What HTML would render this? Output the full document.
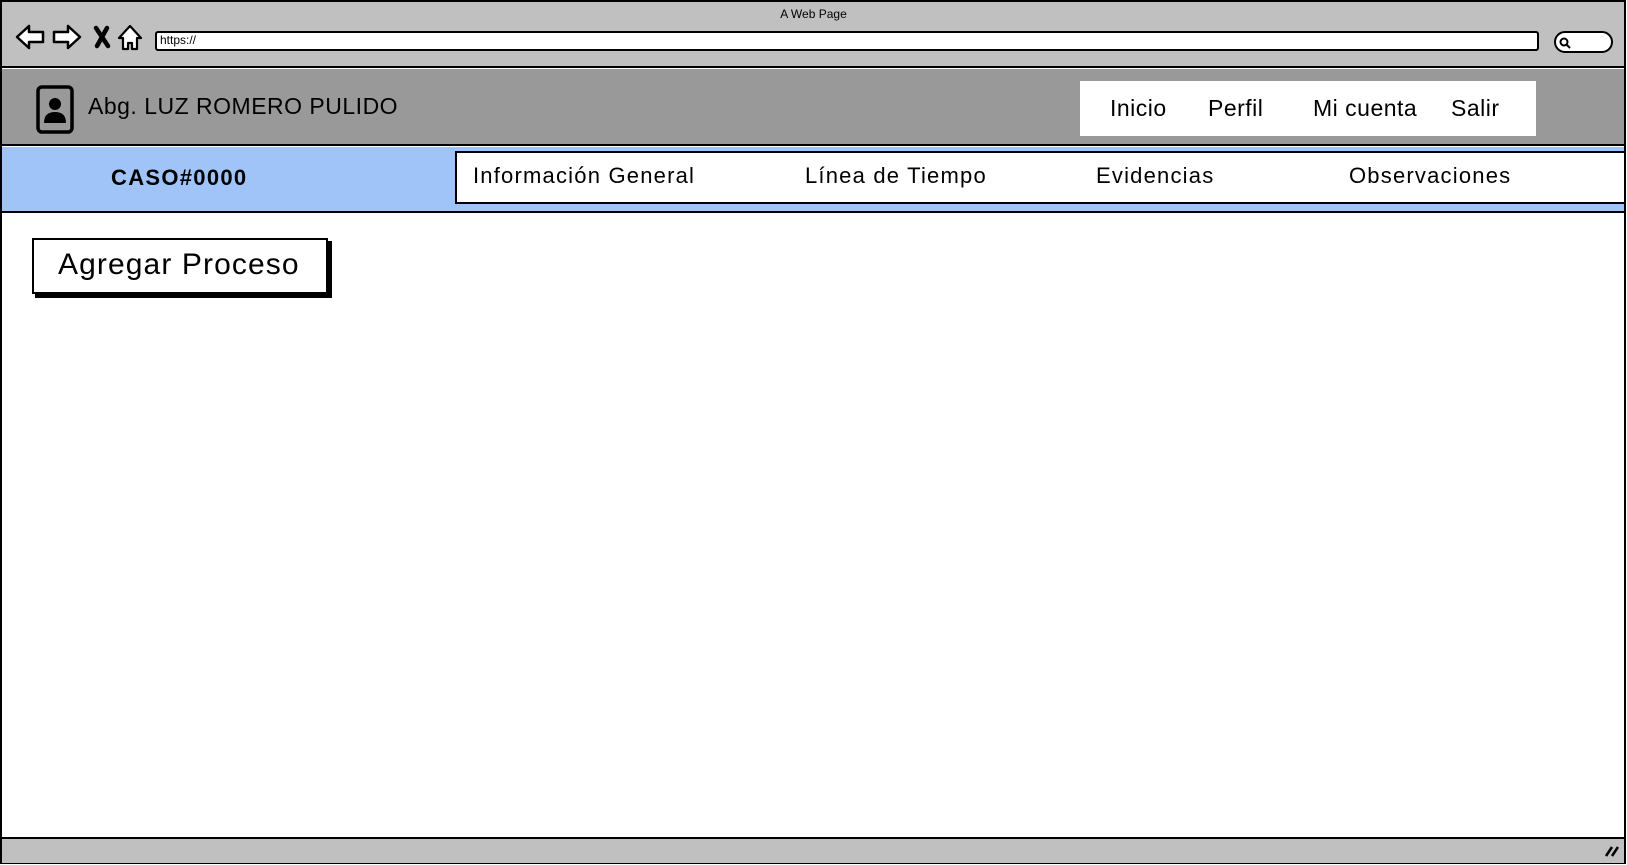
<!DOCTYPE html>
<html><head><meta charset="utf-8"><style>
*{margin:0;padding:0;box-sizing:border-box}
body{width:1627px;height:865px;overflow:hidden;background:#fff;font-family:"Liberation Sans",sans-serif;color:#000;position:relative}
.a{position:absolute}
.t{position:absolute;white-space:nowrap}
</style></head><body>
<div class="a" style="left:0;top:0;width:1626px;height:864px;border:2px solid #000;background:#fff"></div>
<div class="a" style="left:2px;top:2px;width:1622px;height:66px;background:#c0c0c0;border-bottom:2px solid #000"></div>
<div class="t" style="left:0;width:1627px;text-align:center;top:7px;font-size:12px">A Web Page</div>
<svg class="a" style="left:12px;top:20px" width="140" height="34" viewBox="0 0 140 34">
<path d="M5 17 L17 6 L17 12 L31 12 L31 22 L17 22 L17 28 Z" fill="#fff" stroke="#000" stroke-width="2.5" stroke-linejoin="round"/>
<path d="M68 17 L56 6 L56 12 L42 12 L42 22 L56 22 L56 28 Z" fill="#fff" stroke="#000" stroke-width="2.5" stroke-linejoin="round"/>
<path d="M84 8 L96 26 M95 8 L85 26" stroke="#000" stroke-width="4.5" stroke-linecap="round"/>
<path d="M118 6 L107 18 L111 18 L111 29 L116 29 L116 23 L120 23 L120 29 L125 29 L125 18 L129 18 Z" fill="#fff" stroke="#000" stroke-width="2.2" stroke-linejoin="round"/>
</svg>
<div class="a" style="left:155px;top:31px;width:1384px;height:20px;background:#fff;border:2px solid #000;border-radius:3px"></div>
<div class="t" style="left:160px;top:33px;font-size:12px">https://</div>
<div class="a" style="left:1554px;top:31px;width:59px;height:22px;background:#fff;border:2px solid #000;border-radius:11px"></div>
<svg class="a" style="left:1558px;top:36px" width="14" height="14"><circle cx="6" cy="6" r="3.5" fill="none" stroke="#000" stroke-width="2"/><path d="M8.5 8.5 L12 12" stroke="#000" stroke-width="2"/></svg>
<div class="a" style="left:2px;top:69px;width:1622px;height:77px;background:#999;border-bottom:2px solid #000"></div>
<svg class="a" style="left:36px;top:85px" width="40" height="50" viewBox="0 0 40 50">
<rect x="2" y="2" width="34" height="45" rx="4" fill="none" stroke="#000" stroke-width="3.5"/>
<circle cx="19" cy="19" r="6" fill="#000"/><path d="M8 38 Q8 27 19 27 Q30 27 30 38 Z" fill="#000"/>
</svg>
<div class="t" style="left:88px;top:93px;font-size:23px;letter-spacing:0.5px">Abg. LUZ ROMERO PULIDO</div>
<div class="a" style="left:1080px;top:81px;width:456px;height:55px;background:#fff"></div>
<div class="t" style="left:1110px;top:95px;font-size:23px;letter-spacing:0.5px">Inicio</div>
<div class="t" style="left:1208px;top:95px;font-size:23px;letter-spacing:0.5px">Perfil</div>
<div class="t" style="left:1313px;top:95px;font-size:23px;letter-spacing:0.5px">Mi cuenta</div>
<div class="t" style="left:1451px;top:95px;font-size:23px;letter-spacing:0.5px">Salir</div>
<div class="a" style="left:2px;top:147px;width:1622px;height:66px;background:#a0c4f8;border-bottom:2px solid #000"></div>
<div class="t" style="left:111px;top:165px;font-size:22px;font-weight:bold;letter-spacing:1.3px">CASO#0000</div>
<div class="a" style="left:455px;top:151px;width:1171px;height:53px;background:#fff;border:2px solid #000"></div>
<div class="t" style="left:473px;top:163px;font-size:22px;letter-spacing:1.2px">Información General</div>
<div class="t" style="left:805px;top:163px;font-size:22px;letter-spacing:1.2px">Línea de Tiempo</div>
<div class="t" style="left:1096px;top:163px;font-size:22px;letter-spacing:1.2px">Evidencias</div>
<div class="t" style="left:1349px;top:163px;font-size:22px;letter-spacing:1.2px">Observaciones</div>
<div class="a" style="left:35px;top:241px;width:297px;height:57px;background:#000"></div>
<div class="a" style="left:32px;top:238px;width:296px;height:56px;background:#fff;border:2px solid #000"></div>
<div class="t" style="left:58px;top:248px;font-size:30px;letter-spacing:1.1px">Agregar Proceso</div>
<div class="a" style="left:2px;top:837px;width:1622px;height:26px;background:#c0c0c0;border-top:2px solid #000"></div>
<svg class="a" style="left:1603px;top:843px" width="18" height="16"><path d="M3 13 L9 4 M9 13 L15 4" stroke="#000" stroke-width="2.5"/></svg>
</body></html>
